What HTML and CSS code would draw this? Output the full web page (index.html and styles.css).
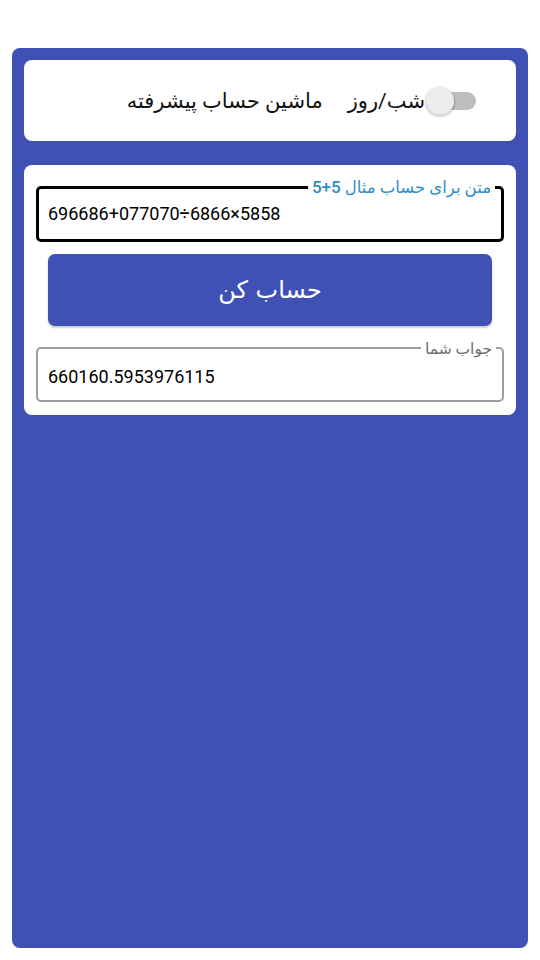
FILE: index.html
```html
<!DOCTYPE html>
<html lang="fa">
<head>
<meta charset="utf-8">
<title>ماشین حساب</title>
<link rel="stylesheet" href="styles.css">
</head>
<body>
<main class="app">
  <section class="card header-card">
    <div class="switch"><span class="track"></span><span class="thumb"></span></div>
    <span class="switch-label">شب/روز</span>
    <span class="title">ماشین حساب پیشرفته</span>
  </section>
  <section class="card calc-card">
    <div class="field field-input">
      <span class="field-label label-active">متن برای حساب مثال <b class="num">5+5</b></span>
      <div class="field-value">696686+077070÷6866×5858</div>
    </div>
    <button class="calc-btn">حساب کن</button>
    <div class="field field-output">
      <span class="field-label label-muted">جواب شما</span>
      <div class="field-value">660160.5953976115</div>
    </div>
  </section>
</main>
</body>
</html>
```
FILE: styles.css
```css
* { box-sizing: border-box; }
html, body { margin: 0; padding: 0; background: #ffffff; }
body {
  padding: 48px 12px 12px;
  font-family: Roboto, "DejaVu Sans", sans-serif;
}
.app {
  background: #3f51b5;
  border-radius: 8px;
  height: 900px;
  padding: 12px;
  display: flex;
  flex-direction: column;
  gap: 24px;
}
.card {
  background: #ffffff;
  border-radius: 8px;
}
.header-card {
  height: 81px;
  direction: rtl;
  display: flex;
  align-items: center;
  padding: 0 40px;
}
.switch {
  position: relative;
  width: 50px;
  height: 28px;
  flex: none;
}
.track {
  position: absolute;
  left: 3px;
  right: 0;
  top: 5px;
  height: 18px;
  border-radius: 9px;
  background: #bdbdbd;
}
.thumb {
  position: absolute;
  left: 0;
  top: 0;
  width: 28px;
  height: 28px;
  border-radius: 50%;
  background: #ececec;
  box-shadow: 0 1px 3px rgba(0,0,0,0.35);
}
.switch-label {
  margin-right: 1px;
  font-size: 21px;
  color: #111;
}
.title {
  margin-right: 25px;
  font-size: 21px;
  color: #111;
}
.calc-card {
  padding: 21px 12px 13px;
  display: flex;
  flex-direction: column;
}
.field {
  position: relative;
  border-radius: 5px;
}
.field-input {
  height: 56px;
  border: 3px solid #000;
}
.field-output {
  height: 55px;
  border: 2px solid #9e9e9e;
  margin-top: 21px;
}
.field-label {
  position: absolute;
  right: 6px;
  background: #fff;
  padding: 0 4px;
  direction: rtl;
  line-height: 20px;
  white-space: nowrap;
}
.num {
  font-weight: 500;
  font-size: 17px;
}
.label-active {
  top: -12px;
  font-size: 16.5px;
  color: #2b8fc6;
}
.label-muted {
  top: -10px;
  font-size: 15.5px;
  color: #6f6f6f;
}
.field-value {
  direction: ltr;
  text-align: left;
  font-size: 18px;
  color: #000;
  padding: 0 9px;
  line-height: 50px;
}
.field-output .field-value {
  padding: 0 10px;
  line-height: 55px;
}
.calc-btn {
  margin: 12px 12px 0;
  height: 72px;
  border: none;
  border-radius: 7px;
  background: #3f51b5;
  color: #fff;
  font-family: "DejaVu Sans", sans-serif;
  font-size: 24px;
  direction: rtl;
  box-shadow: 0 2px 2px rgba(0,0,0,0.2);
  padding: 0;
}
```
